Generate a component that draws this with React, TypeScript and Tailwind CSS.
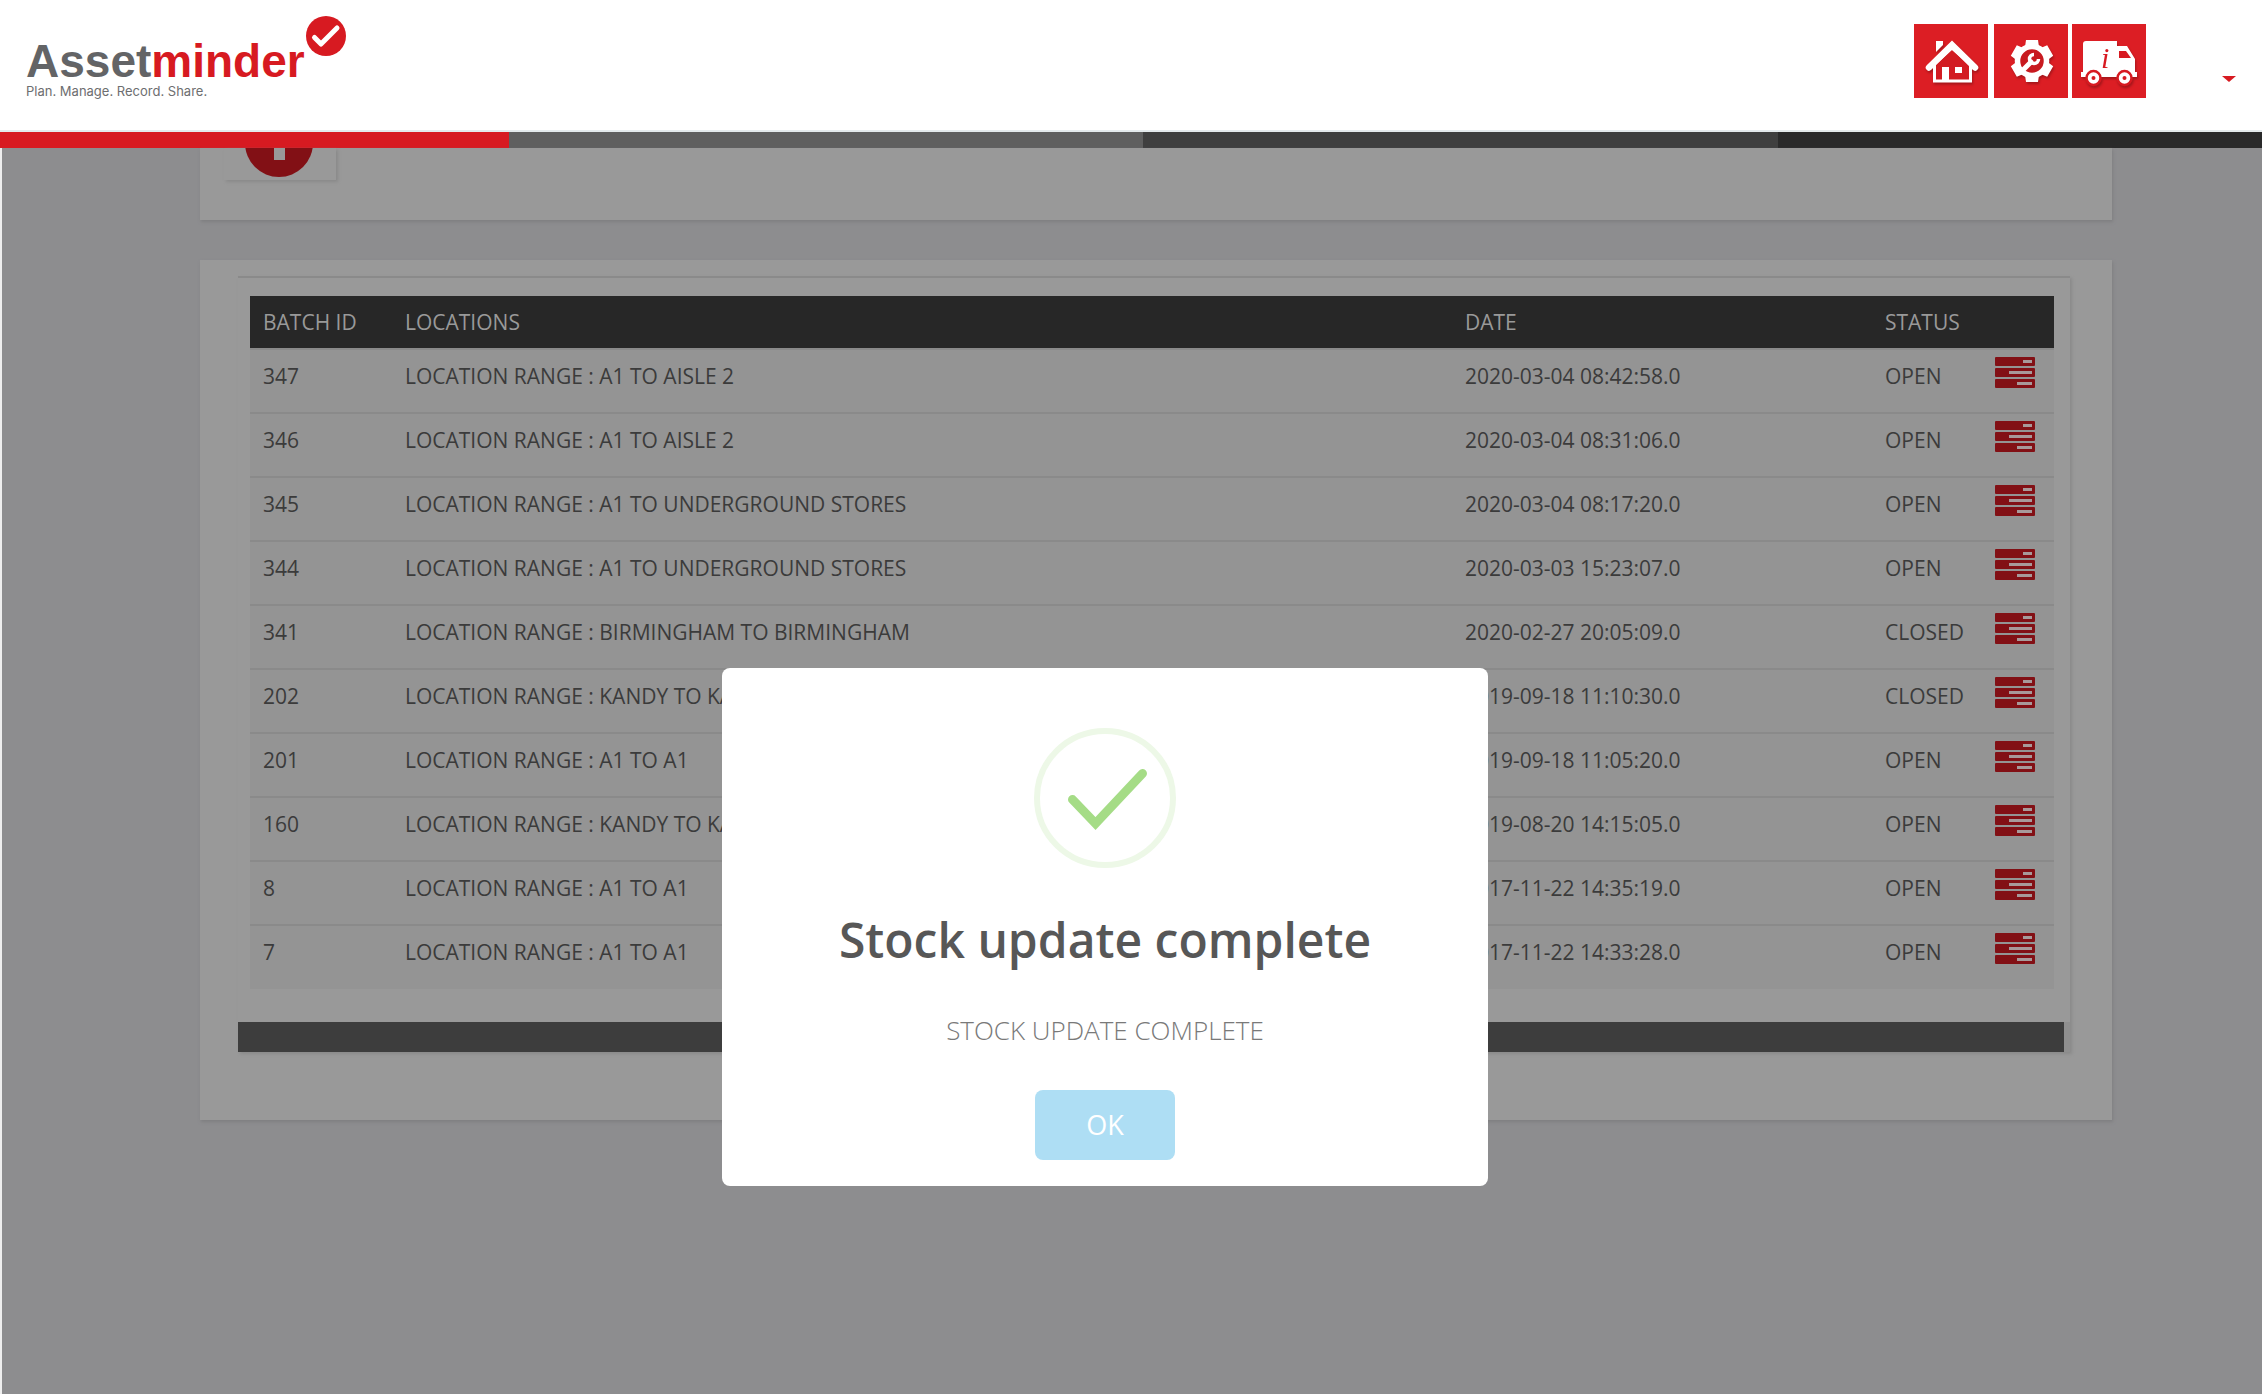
import { useState } from 'react';

type Batch = { id: number; location: string; date: string; status: string };

const batches: Batch[] = [
  { id: 347, location: 'LOCATION RANGE : A1 TO AISLE 2', date: '2020-03-04 08:42:58.0', status: 'OPEN' },
  { id: 346, location: 'LOCATION RANGE : A1 TO AISLE 2', date: '2020-03-04 08:31:06.0', status: 'OPEN' },
  { id: 345, location: 'LOCATION RANGE : A1 TO UNDERGROUND STORES', date: '2020-03-04 08:17:20.0', status: 'OPEN' },
  { id: 344, location: 'LOCATION RANGE : A1 TO UNDERGROUND STORES', date: '2020-03-03 15:23:07.0', status: 'OPEN' },
  { id: 341, location: 'LOCATION RANGE : BIRMINGHAM TO BIRMINGHAM', date: '2020-02-27 20:05:09.0', status: 'CLOSED' },
  { id: 202, location: 'LOCATION RANGE : KANDY TO KANDY', date: '2019-09-18 11:10:30.0', status: 'CLOSED' },
  { id: 201, location: 'LOCATION RANGE : A1 TO A1', date: '2019-09-18 11:05:20.0', status: 'OPEN' },
  { id: 160, location: 'LOCATION RANGE : KANDY TO KANDY', date: '2019-08-20 14:15:05.0', status: 'OPEN' },
  { id: 8, location: 'LOCATION RANGE : A1 TO A1', date: '2017-11-22 14:35:19.0', status: 'OPEN' },
  { id: 7, location: 'LOCATION RANGE : A1 TO A1', date: '2017-11-22 14:33:28.0', status: 'OPEN' },
];

function Logo() {
  return (
    <a href="#" aria-label="Assetminder home" className="relative block pl-[26px] pt-[37px]">
      <div className="font-['Liberation_Sans'] text-[46px] leading-[48px] font-bold text-[#636466]">
        Asset<span className="text-[#d71a21]">minder</span>
      </div>
      <div className="font-['Inter'] text-[13px] leading-3 text-[#6d6e70]">Plan. Manage. Record. Share.</div>
      <svg className="absolute left-[306px] top-4" width="40" height="40" viewBox="0 0 40 40">
        <circle cx="20" cy="20" r="20" fill="#d71a21" />
        <path d="M8.500 21.500 15 28 31 12" fill="none" stroke="#fff" strokeWidth="5" strokeLinecap="round" strokeLinejoin="round" />
      </svg>
    </a>
  );
}

function HomeIcon() {
  return (
    <svg width="74" height="74" viewBox="0 0 74 74" className="drop-shadow-[1px_2px_1px_rgba(0,0,0,0.25)]">
      <path d="M22 17h7v4l-7 7z" fill="#fff" />
      <path d="M20.500 40v17h36V40L38 24z" fill="#d21c22" stroke="#fff" strokeWidth="3" />
      <path d="M15 43.500 38 21 61 43.500" fill="none" stroke="#fff" strokeWidth="6.500" strokeLinecap="round" />
      <path d="M28 43h7v14h-7zM41 43h7v6h-7z" fill="#fff" />
    </svg>
  );
}

function SettingsIcon() {
  return (
    <svg width="74" height="74" viewBox="0 0 74 74" className="drop-shadow-[1px_2px_1px_rgba(0,0,0,0.25)]">
      <g fill="#fff">
        <path d="M32 16h12l1 7H31zM32 58h12l1-7H31z" />
        <path d="M32 16h12l1 7H31zM32 58h12l1-7H31z" transform="rotate(60 38 37)" />
        <path d="M32 16h12l1 7H31zM32 58h12l1-7H31z" transform="rotate(120 38 37)" />
      </g>
      <circle cx="38" cy="37" r="14.500" fill="#c81a20" stroke="#fff" strokeWidth="5.500" />
      <path d="M29 46 37 38" stroke="#fff" strokeWidth="5" strokeLinecap="round" />
      <path d="M40 30.500A4.500 4.500 0 1 0 44.500 35" fill="none" stroke="#fff" strokeWidth="3.500" />
    </svg>
  );
}

function VanIcon() {
  return (
    <svg width="74" height="74" viewBox="0 0 74 74" className="drop-shadow-[1px_2px_1px_rgba(0,0,0,0.25)]">
      <path d="M14 17h31v5h10l8 13v13h2v5H9v-5h2V20q0-3 3-3z" fill="#fff" />
      <path d="M47 27h7l5 7H47z" fill="#d71a21" />
      <g fill="#fff" stroke="#d71a21">
        <circle cx="21.500" cy="54" r="7" strokeWidth="2.500" />
        <circle cx="52.500" cy="54" r="7" strokeWidth="2.500" />
      </g>
      <circle cx="21.500" cy="54" r="2" fill="#d71a21" />
      <circle cx="52.500" cy="54" r="2" fill="#d71a21" />
      <text x="29" y="44" fill="#d71a21" className="font-['Liberation_Serif'] text-[30px] italic">i</text>
    </svg>
  );
}

function TasksIcon() {
  return (
    <svg width="40" height="31" viewBox="0 0 40 31">
      <g fill="#821015">
        <rect width="40" height="9" rx="1" />
        <rect y="11" width="40" height="9" rx="1" />
        <rect y="22" width="40" height="9" rx="1" />
      </g>
      <path d="M28 3h9v3h-9zM14 14h23v3H14zM22 25h15v3H22z" fill="#a8999a" />
    </svg>
  );
}

function Header() {
  return (
    <header>
      <div className="flex h-[132px] items-start justify-between border-b-2 border-[#e4eaec] bg-white">
        <Logo />
        <nav className="flex items-start pt-6 pr-[26px]">
          <a href="#" aria-label="Home" className="mr-1.5 bg-[#dc1e24]"><HomeIcon /></a>
          <a href="#" aria-label="Settings" className="mr-1 bg-[#dc1e24]"><SettingsIcon /></a>
          <a href="#" aria-label="Deliveries" className="bg-[#dc1e24]"><VanIcon /></a>
          <button type="button" aria-label="Account menu" className="ml-[76px] pt-[52px]">
            <svg width="14" height="6" viewBox="0 0 14 6">
              <path d="M0 0h14L7 6z" fill="#d71a21" />
            </svg>
          </button>
        </nav>
      </div>
      <div className="grid h-4 grid-cols-[509fr_634fr_635fr_484fr]">
        <div className="bg-[#d71a21]" />
        <div className="bg-[#5f5f5f]" />
        <div className="bg-[#3f3f3f]" />
        <div className="bg-[#2a2a2a]" />
      </div>
    </header>
  );
}

function BatchTable() {
  return (
    <table className="w-full table-fixed text-left text-[21px] leading-[30px] text-[#3b3b3b]">
      <colgroup>
        <col className="w-[142px]" />
        <col />
        <col className="w-[420px]" />
        <col className="w-[123px]" />
        <col className="w-[59px]" />
      </colgroup>
      <thead>
        <tr className="h-[53px] bg-[#272727] text-[#999]">
          <th className="pl-[13px] font-normal">BATCH ID</th>
          <th className="pl-[13px] font-normal">LOCATIONS</th>
          <th className="pl-[13px] font-normal">DATE</th>
          <th className="pl-[13px] font-normal">STATUS</th>
          <th aria-label="Actions" />
        </tr>
      </thead>
      <tbody>
        {batches.map((b) => (
          <tr key={b.id} className="h-16 border-t-2 border-[#8a8a8a] bg-[#949494] align-top">
            <td className="pl-[13px] pt-[11px]">{b.id}</td>
            <td className="pl-[13px] pt-[11px]">{b.location}</td>
            <td className="pl-[13px] pt-[11px]">{b.date}</td>
            <td className="pl-[13px] pt-[11px]">{b.status}</td>
            <td className="pt-[7px]">
              <button type="button" aria-label={`Open batch ${b.id}`} className="block"><TasksIcon /></button>
            </td>
          </tr>
        ))}
      </tbody>
    </table>
  );
}

function SuccessDialog({ onClose }: { onClose: () => void }) {
  return (
    <div
      role="dialog"
      aria-labelledby="dialog-title"
      className="absolute left-1/2 top-[668px] ml-[-409px] flex w-[766px] flex-col items-center rounded-lg bg-white pt-[60px] pb-[26px]"
    >
      <svg width="142" height="140" viewBox="0 0 142 140">
        <ellipse cx="71" cy="70" rx="68" ry="67" fill="none" stroke="#edf8e7" strokeWidth="6" />
        <path d="M38.500 71.500 61.500 95.500 108.500 45.500" fill="none" stroke="#a5dc86" strokeWidth="9" strokeLinecap="round" />
      </svg>
      <h2 id="dialog-title" className="mt-[37px] text-[48px] leading-[70px] font-semibold text-[#575757]">Stock update complete</h2>
      <p className="mt-[37px] text-[26px] leading-9 font-light text-[#797979]">STOCK UPDATE COMPLETE</p>
      <button type="button" onClick={onClose} className="mt-[42px] h-[70px] w-[140px] rounded-lg bg-[#aedef4] text-[27px] text-white">
        OK
      </button>
    </div>
  );
}

export default function App() {
  const [open, setOpen] = useState(true);

  return (
    <div className="relative flex min-h-screen flex-col bg-[#8d8d8f] font-['Open_Sans',sans-serif]">
      <Header />
      <main className="flex-1 border-l-2 border-[#eee] pl-[198px] pr-[150px] pb-10">
        <section className="h-[72px] bg-[#999] pl-6 shadow-[1px_2px_3px_#7f7f81]">
          <button type="button" aria-label="Add batch" className="block h-8 w-28 pl-[21px] shadow-[2px_2px_3px_#8a8a8a]">
            <svg width="68" height="32" viewBox="0 0 68 32">
              <circle cx="34" cy="-5" r="34" fill="#821015" />
              <path d="M29 0h11v12H29z" fill="#999" />
            </svg>
          </button>
        </section>
        <section className="mt-10 bg-[#999] pl-[38px] pr-[42px] pt-4 pb-[68px] shadow-[1px_2px_3px_#7f7f81]">
          <div className="border-t-2 border-[#8a8a8a] shadow-[2px_2px_3px_#8a8a8a]">
            <div className="pl-3 pr-4 pt-[18px] pb-[33px]">
              <BatchTable />
            </div>
            <div className="h-[30px] border-r-[6px] border-[#8f8f8f] bg-[#3d3d3d]" />
          </div>
        </section>
      </main>
      {open && <SuccessDialog onClose={() => setOpen(false)} />}
    </div>
  );
}
